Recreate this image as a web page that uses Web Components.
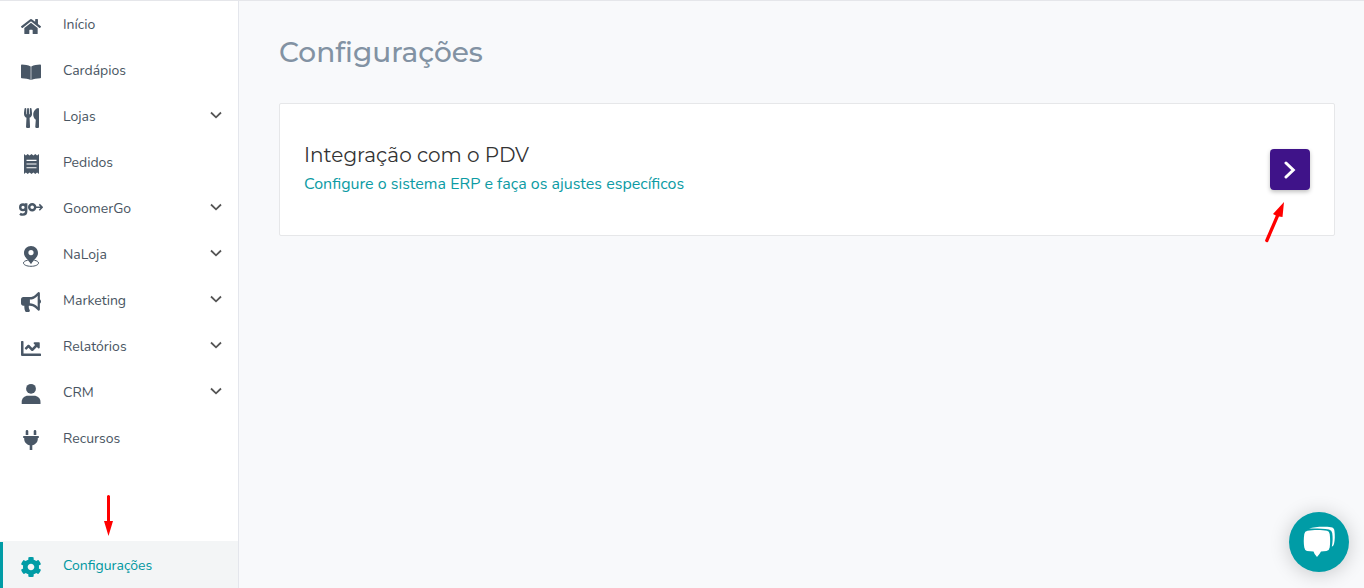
<!DOCTYPE html>
<html lang="pt-BR">
<head>
<meta charset="utf-8">
<meta name="viewport" content="width=device-width, initial-scale=1">
<title>Configurações</title>
<style>
  body { margin: 0; font-family: Nunito, Roboto, sans-serif; background: #f8f9fb; }
</style>
</head>
<body>
<app-shell>
  <side-menu slot="menu">
    <menu-item icon="home">Início</menu-item>
    <menu-item icon="book">Cardápios</menu-item>
    <menu-item icon="utensils" expandable>Lojas</menu-item>
    <menu-item icon="receipt">Pedidos</menu-item>
    <menu-item icon="go" expandable>GoomerGo</menu-item>
    <menu-item icon="pin" expandable>NaLoja</menu-item>
    <menu-item icon="bullhorn" expandable>Marketing</menu-item>
    <menu-item icon="chart" expandable>Relatórios</menu-item>
    <menu-item icon="user" expandable>CRM</menu-item>
    <menu-item icon="plug">Recursos</menu-item>
    <menu-item slot="footer" icon="cog" active>Configurações</menu-item>
  </side-menu>
  <page-title>Configurações</page-title>
  <setting-card>
    <span slot="title">Integração com o PDV</span>
    <span slot="description">Configure o sistema ERP e faça os ajustes específicos</span>
  </setting-card>
</app-shell>
<chat-button></chat-button>

<script>
const ICONS = {
  home: '<svg x="2" y="5" width="20" height="15" viewBox="0 31 576 450" preserveAspectRatio="none"><path d="M280.37 148.26L96 300.11V464a16 16 0 0 0 16 16l112.06-.29a16 16 0 0 0 15.92-16V368a16 16 0 0 1 16-16h64a16 16 0 0 1 16 16v95.64a16 16 0 0 0 16 16.05L464 480a16 16 0 0 0 16-16V300L295.67 148.26a12.19 12.19 0 0 0-15.3 0zM571.6 251.47L488 182.56V44.05a12 12 0 0 0-12-12h-56a12 12 0 0 0-12 12v72.61L318.47 43a48 48 0 0 0-61 0L4.34 251.47a12 12 0 0 0-1.6 16.9l25.5 31A12 12 0 0 0 45.15 301l235.22-193.74a12.19 12.19 0 0 1 15.3 0L530.9 301a12 12 0 0 0 16.9-1.6l25.5-31a12 12 0 0 0-1.7-16.93z"/></svg>',
  book: '<path d="M2 5.4Q2 4.6 2.8 4.6C6 4.7 9 5.2 11.7 6.4V19.9C9.5 18.900 6 18.400 2.700 18.200Q2 18.200 2 17.500ZM22 5.400Q22 4.600 21.200 4.600C18 4.700 15 5.200 12.300 6.400V19.900C14.500 18.900 18 18.400 21.300 18.200Q22 18.200 22 17.500Z"/>',
  utensils: '<svg x="5" y="2" width="15" height="20" viewBox="0 0 416 512" preserveAspectRatio="none"><path d="M207.9 15.2c.8 4.7 16.1 94.5 16.1 128.8 0 52.3-27.8 89.6-68.9 104.6L168 486.7c.7 13.7-10.2 25.3-24 25.3H80c-13.7 0-24.7-11.5-24-25.3l12.9-238.1C27.7 233.6 0 196.2 0 144 0 109.6 15.3 19.9 16.1 15.2 19.3-5.1 61.4-5.4 64 16.3v141.2c1.3 3.4 15.1 3.2 16 0 1.4-25.3 7.9-139.2 8-141.8 3.3-20.8 44.7-20.8 47.9 0 .2 2.7 6.6 116.5 8 141.8.9 3.2 14.8 3.4 16 0V16.3c2.6-21.6 44.8-21.4 48-1.1zm119.2 285.7l-15 185.1c-1.2 14 9.9 26 23.9 26h56c13.3 0 24-10.7 24-24V24c0-13.2-10.7-24-24-24-82.5 0-221.4 178.5-64.9 300.9z"/></svg>',
  receipt: '<path fill-rule="evenodd" d="M5 2L6.9 3.4L8.7 2L10.6 3.4L12.5 2L14.4 3.4L16.3 2L18.1 3.4L20 2V22L18.1 20.6L16.3 22L14.4 20.6L12.5 22L10.6 20.6L8.7 22L6.9 20.6L5 22ZM7.5 7.8V8.9H17.5V7.8ZM7.5 11.5V12.6H17.5V11.5ZM7.5 15.2V16.3H17.5V15.2Z"/>',
  go: '<g fill="none" stroke="currentColor" stroke-width="2.4"><circle cx="4" cy="9.3" r="2.8"/><path d="M7.2 5.3V13.3Q7.2 16.6 3.9 16.6Q2.1 16.6 1 15.7"/><circle cx="13.2" cy="9.3" r="3"/></g><path d="M17 9.3H23M20.3 6.4L23.2 9.3L20.3 12.2" fill="none" stroke="currentColor" stroke-width="1.5"/>',
  pin: '<path fill-rule="evenodd" d="M12 2C8 2 5 5 5 8.9C5 13.3 8.8 15 12 20.3C15.200 15 19 13.300 19 8.900C19 5 16 2 12 2ZM12 6A2.600 2.600 0 1 1 12 11.200A2.600 2.600 0 1 1 12 6Z"/><path d="M8.700 16.300C6 16.700 4.500 17.700 4.500 19C4.500 20.900 7.900 22.300 12 22.300S19.500 20.900 19.500 19C19.500 17.700 18 16.700 15.300 16.300" fill="none" stroke="currentColor"/>',
  bullhorn: '<svg x="2" y="2" width="20" height="20" viewBox="0 0 576 512" preserveAspectRatio="none"><path d="M576 240c0-23.63-12.95-44.04-32-55.12V32.01C544 23.26 537.02 0 512 0c-7.12 0-14.19 2.38-19.98 7.02l-85.03 68.03C364.28 109.19 310.66 128 256 128H64c-35.35 0-64 28.65-64 64v96c0 35.35 28.65 64 64 64h33.7c-1.39 10.48-2.18 21.14-2.18 32 0 39.77 9.26 77.35 25.56 110.94 5.19 10.69 16.52 17.06 28.4 17.06h74.28c26.05 0 41.69-29.84 25.9-50.56-16.4-21.52-26.15-48.36-26.15-77.44 0-11.11 1.62-21.79 4.41-32H256c54.66 0 108.28 18.81 150.98 52.95l85.03 68.03a32.023 32.023 0 0 0 19.98 7.02c24.92 0 32-22.78 32-32V295.13C563.05 284.04 576 263.63 576 240zm-96 141.42l-33.05-26.44C392.95 311.78 325.12 288 256 288v-96c69.12 0 136.95-23.78 190.95-66.98L480 98.58v282.84z"/></svg>',
  chart: '<svg x="2" y="5" width="20" height="15" viewBox="0 64 512 384" preserveAspectRatio="none"><path d="M496 384H64V80c0-8.84-7.16-16-16-16H16C7.16 64 0 71.16 0 80v336c0 17.67 14.33 32 32 32h464c8.84 0 16-7.16 16-16v-32c0-8.84-7.16-16-16-16zM464 96H345.94c-21.38 0-32.09 25.85-16.97 40.97l32.4 32.4L288 242.75l-73.37-73.37c-12.5-12.5-32.76-12.5-45.25 0l-68.69 68.69c-6.25 6.25-6.25 16.38 0 22.63l22.62 22.62c6.25 6.25 16.38 6.25 22.63 0L192 237.25l73.37 73.37c12.5 12.5 32.76 12.5 45.25 0l96-96 32.4 32.4c15.12 15.12 40.97 4.41 40.97-16.97V112c.01-8.84-7.15-16-15.99-16z"/></svg>',
  user: '<circle cx="12" cy="6.8" r="4.9"/><path d="M2.7 22V20C2.7 16.3 5.5 13.8 9 13.8H15C18.5 13.8 21.5 16.3 21.5 20V22Z"/>',
  plug: '<path d="M6.7 3.3a1.3 1.3 0 0 1 2.6 0V7H6.7ZM14.7 3.3a1.3 1.3 0 0 1 2.6 0V7H14.7ZM4.2 8H19.8V10H18.8V11C18.8 14 16.4 16.7 13.3 17.3V22H10.7V17.3C7.6 16.7 5.2 14 5.2 11V10H4.2Z"/>',
  cog: '<svg x="2" y="2" width="20" height="20" viewBox="16 8 480 496" preserveAspectRatio="none"><path d="M487.4 315.7l-42.6-24.6c4.3-23.2 4.3-47 0-70.2l42.6-24.6c4.9-2.8 7.1-8.6 5.5-14-11.1-35.6-30-67.8-54.7-94.6-3.8-4.1-10-5.1-14.8-2.3L380.8 110c-17.9-15.4-38.5-27.3-60.8-35.1V25.8c0-5.6-3.9-10.5-9.4-11.7-36.7-8.2-74.3-7.8-109.2 0-5.5 1.2-9.4 6.1-9.4 11.7V75c-22.2 7.9-42.8 19.8-60.8 35.1L88.7 85.5c-4.9-2.8-11-1.9-14.8 2.3-24.7 26.7-43.6 58.9-54.7 94.6-1.7 5.4.6 11.2 5.5 14L67.3 221c-4.3 23.2-4.3 47 0 70.2l-42.6 24.6c-4.9 2.8-7.1 8.6-5.5 14 11.1 35.6 30 67.8 54.7 94.6 3.8 4.1 10 5.1 14.8 2.3l42.6-24.6c17.9 15.4 38.5 27.3 60.8 35.1v49.2c0 5.6 3.9 10.5 9.4 11.7 36.7 8.2 74.3 7.8 109.2 0 5.5-1.2 9.4-6.1 9.4-11.7v-49.2c22.2-7.9 42.8-19.8 60.8-35.1l42.6 24.6c4.9 2.8 11 1.9 14.8-2.3 24.7-26.7 43.6-58.9 54.7-94.6 1.5-5.5-.7-11.3-5.6-14.1zM256 336c-44.1 0-80-35.9-80-80s35.9-80 80-80 80 35.9 80 80-35.9 80-80 80z"/></svg>'
};

class AppShell extends HTMLElement {
  constructor() {
    super();
    this.attachShadow({ mode: 'open' }).innerHTML = `
      <style>
        :host { display: grid; grid-template-columns: 239px 1fr; min-height: 100vh; box-sizing: border-box; border-top: 1px solid #e5e6ea; }
        main { padding: 29px 29px 29px 40px; min-width: 0; }
      </style>
      <slot name="menu"></slot>
      <main><slot></slot></main>`;
  }
}

class SideMenu extends HTMLElement {
  constructor() {
    super();
    this.attachShadow({ mode: 'open' }).innerHTML = `
      <style>
        :host { display: block; background: #fff; border-right: 1px solid #e4e6ec; }
        nav { display: flex; flex-direction: column; height: 100%; }
        .footer { position: relative; margin-top: auto; border-top: 1px solid #f3f5f6; }
        .arrow { position: absolute; left: 103px; bottom: 52px; display: block; }
      </style>
      <nav aria-label="Menu principal">
        <slot></slot>
        <div class="footer">
          <svg class="arrow" width="11" height="42" viewBox="0 0 11 42" fill="#f00" aria-hidden="true"><path d="M4 2Q5.5 0 7 2V27H10L5.5 42L1 27H4Z"/></svg>
          <slot name="footer"></slot>
        </div>
      </nav>`;
  }
}

class MenuItem extends HTMLElement {
  constructor() {
    super();
    this.attachShadow({ mode: 'open' });
  }
  connectedCallback() {
    this.shadowRoot.innerHTML = `
      <style>
        :host { display: block; color: #495562; }
        :host([active]) { color: #0097a0; background: #f3f5f6; box-shadow: inset 3px 0 #009ca6; }
        a { display: flex; align-items: center; gap: 20px; height: 46px; padding: 0 16px 0 19px; color: inherit; text-decoration: none; font-size: 14px; line-height: 20px; }
        .label { flex: 1; padding-top: 2px; }
        .icon { display: block; margin-top: 4px; color: #495766; }
        :host([active]) .icon { color: #009ca6; }
        .chevron { display: block; margin-bottom: 2px; }
      </style>
      <a href="#">
        <svg class="icon" width="24" height="24" viewBox="0 0 24 24" fill="currentColor" aria-hidden="true">${ICONS[this.getAttribute('icon')]}</svg>
        <span class="label"><slot></slot></span>
        ${this.hasAttribute('expandable') ? '<svg class="chevron" width="12" height="8" viewBox="0 0 12 8" fill="none" stroke="#555" stroke-width="1.8" aria-hidden="true"><path d="M1 1.5L6 6.3L11 1.5"/></svg>' : ''}
      </a>`;
  }
}

class PageTitle extends HTMLElement {
  constructor() {
    super();
    this.attachShadow({ mode: 'open' }).innerHTML = `
      <style>
        :host { display: block; margin-bottom: 29px; }
        h1 { margin: 0; font: 500 28px/44px Montserrat, Inter, sans-serif; font-variant-ligatures: none; color: #8292a3; }
      </style>
      <h1><slot></slot></h1>`;
  }
}

class SettingCard extends HTMLElement {
  constructor() {
    super();
    this.attachShadow({ mode: 'open' }).innerHTML = `
      <style>
        :host { display: block; }
        section { position: relative; display: flex; align-items: center; justify-content: space-between; gap: 24px; padding: 36px 24px; background: #fff; border: 1px solid #e6e7e9; border-radius: 2px; }
        .text { padding-top: 1px; }
        h2 { margin: 0; font: 450 20px/28px Montserrat, Inter, sans-serif; color: #333; }
        p { margin: 0; font-size: 16px; line-height: 30px; color: #0c9ba4; }
        button { flex: none; display: grid; place-items: center; width: 40px; height: 41px; padding: 0; border: 0; border-radius: 4px; background: #3f1389; box-shadow: 0 2px 4px rgba(0, 0, 0, .25); cursor: pointer; }
        .arrow { position: absolute; right: 48px; bottom: -8px; }
      </style>
      <section>
        <div class="text">
          <h2><slot name="title"></slot></h2>
          <p><slot name="description"></slot></p>
        </div>
        <button type="button" aria-label="Abrir integração com o PDV">
          <svg width="12" height="18" viewBox="0 0 12 18" fill="none" stroke="#fff" stroke-width="3" stroke-linecap="round" aria-hidden="true"><path d="M2 2L9.300 9L2 16"/></svg>
        </button>
        <svg class="arrow" width="22" height="42" viewBox="0 0 22 42" fill="#f00" aria-hidden="true"><path d="M1 39.5L11.8 14.5L9 13L20 1L18.5 16L15 15.5L4 41Q1.6 42 1 39.5Z"/></svg>
      </section>`;
  }
}

class ChatButton extends HTMLElement {
  constructor() {
    super();
    this.attachShadow({ mode: 'open' }).innerHTML = `
      <style>
        :host { position: fixed; right: 15px; bottom: 16px; display: block; }
        button { display: block; width: 60px; height: 60px; padding: 0; border: 0; border-radius: 50%; background: #009ca6; box-shadow: 0 2px 20px rgba(0, 0, 0, .2); cursor: pointer; }
        svg { display: block; }
      </style>
      <button type="button" aria-label="Abrir chat">
        <svg width="60" height="60" viewBox="0 0 60 60" fill="#fff" aria-hidden="true">
          <path d="M20 16.6C26 14.6 36 14.5 42 15.3Q45 15.7 45.4 18.5C46 23 46 28 45 32Q44.5 34.3 42.8 34.8C43.9 30 43.8 25 43.2 21Q42.8 18 40 17.5C34 16.5 26 16.5 20 16.6Z"/>
          <path d="M18.5 18.7C24 17.7 33 17.7 38 18.7Q40.3 19.2 40.7 22C41.3 27 41.3 31 40.7 35.5Q40.3 38.4 37.5 38.9L32 39.6Q30.5 42.5 28 45Q25.3 42.5 24.5 39.6L18 38.9Q15.7 38.5 15.3 35.5C14.6 31 14.6 27 15.3 22Q15.7 19.2 18.5 18.7Z"/>
        </svg>
      </button>`;
  }
}

customElements.define('app-shell', AppShell);
customElements.define('side-menu', SideMenu);
customElements.define('menu-item', MenuItem);
customElements.define('page-title', PageTitle);
customElements.define('setting-card', SettingCard);
customElements.define('chat-button', ChatButton);
</script>
</body>
</html>
